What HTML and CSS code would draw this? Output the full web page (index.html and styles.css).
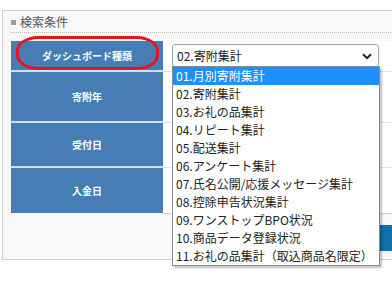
FILE: index.html
```html
<!DOCTYPE html>
<html>
<head>
    <title>検索条件</title>
    <link rel="stylesheet" href="styles.css">
</head>
<body>
    <div class="panel">
        <div class="panel-title"><span class="bullet"></span>検索条件</div>
        <div class="search-area">
            <table class="search-table">
                <tr class="row-type">
                    <th>ダッシュボード種類</th>
                    <td>
                        <div class="select-box">
                            <span>02.寄附集計</span>
                            <svg class="chevron" width="10" height="7" viewBox="0 0 10 7"><path d="M1 1.2 L5 5.2 L9 1.2" fill="none" stroke="#222" stroke-width="2"/></svg>
                        </div>
                    </td>
                </tr>
                <tr class="row-year">
                    <th>寄附年</th>
                    <td></td>
                </tr>
                <tr class="row-accept">
                    <th>受付日</th>
                    <td></td>
                </tr>
                <tr class="row-paid">
                    <th>入金日</th>
                    <td></td>
                </tr>
            </table>
            <div class="actions">
                <button class="search-btn" aria-label="検索"></button>
            </div>

            <div class="highlight"></div>

            <ul class="dropdown">
                <li class="selected">01.月別寄附集計</li>
                <li>02.寄附集計</li>
                <li>03.お礼の品集計</li>
                <li>04.リピート集計</li>
                <li>05.配送集計</li>
                <li>06.アンケート集計</li>
                <li>07.氏名公開/応援メッセージ集計</li>
                <li>08.控除申告状況集計</li>
                <li>09.ワンストップBPO状況</li>
                <li>10.商品データ登録状況</li>
                <li>11.お礼の品集計（取込商品名限定）</li>
            </ul>
        </div>
    </div>
</body>
</html>
```

FILE: styles.css
```css
html, body {
    height: 100%;
}

body {
    margin: 0;
    min-height: 282px;
    background: #fff;
    font-family: "Noto Sans CJK JP", "Noto Sans", sans-serif;
    color: #222;
}

.panel {
    margin: 10px 0 0 2px;
    width: 390px;
    height: 248px;
    border: 1px solid #cfcfcf;
    border-right: none;
    background: #f8f8f8;
}

.panel-title {
    display: flex;
    align-items: center;
    height: 21px;
    margin: 0 0 0 8px;
    font-size: 12px;
    color: #555;
    border-bottom: 1px dotted #bdbdbd;
}

.bullet {
    width: 5px;
    height: 5px;
    background: #9a9a9a;
    margin: 1px 4px 0 0;
}

.search-area {
    position: relative;
    padding: 8px 0 0 8px;
}

.search-table {
    border-collapse: collapse;
    width: 382px;
}

.search-table th {
    width: 152px;
    background: #467db4;
    color: #fff;
    font-size: 10px;
    font-weight: bold;
    text-align: center;
    padding: 0;
    border-bottom: 2px solid #d3e0ed;
}

.search-table tr:last-child th {
    border-bottom: none;
}

.search-table td {
    background: #fff;
    padding: 0 0 0 9px;
    border-bottom: 1px solid #e2e2e2;
}

.search-table tr:last-child td {
    border-bottom: 1px solid #d0d0d0;
}

.row-type th, .row-type td { height: 29px; }
.row-year th, .row-year td { height: 49px; }
.row-accept th, .row-accept td { height: 43px; }
.row-paid th, .row-paid td { height: 45px; }

.select-box {
    display: flex;
    align-items: center;
    justify-content: space-between;
    box-sizing: border-box;
    width: 207px;
    height: 23px;
    padding: 0 6px 0 4px;
    border: 1px solid #8fa8b2;
    border-radius: 3px;
    background: #fff;
    font-size: 12px;
}

.chevron {
    margin-top: 1px;
}

.actions {
    display: flex;
    justify-content: flex-end;
    padding-top: 11px;
}

.search-btn {
    width: 180px;
    height: 26px;
    border: none;
    background: #106ea8;
}

.highlight {
    position: absolute;
    left: 13px;
    top: 3px;
    width: 137px;
    height: 28px;
    border: 3px solid #e3141c;
    border-radius: 22px / 15px;
}

.dropdown {
    position: absolute;
    left: 169px;
    top: 33px;
    width: 206px;
    margin: 0;
    padding: 0;
    list-style: none;
    background: #fff;
    border: 1px solid #8a8a8a;
    box-shadow: 2px 2px 2px rgba(0, 0, 0, 0.25);
    font-size: 12px;
}

.dropdown li {
    display: block;
    height: 18px;
    line-height: 18px;
    overflow: hidden;
    padding-left: 3px;
    white-space: nowrap;
}

.dropdown li.selected {
    background: #1e8fff;
    color: #fff;
}
```
